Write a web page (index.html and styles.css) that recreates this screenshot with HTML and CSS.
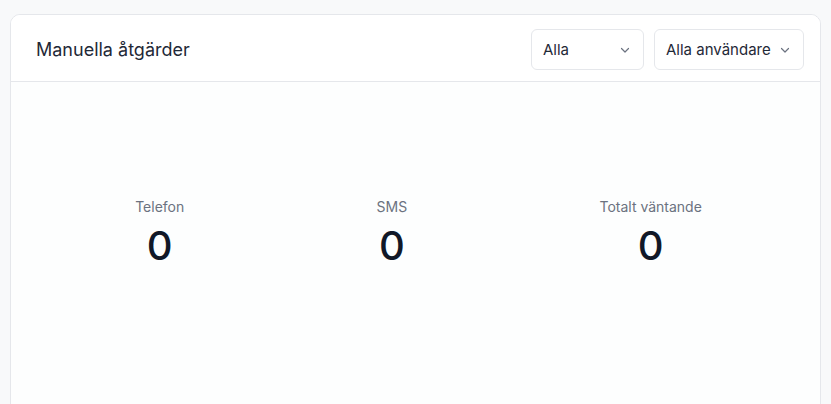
FILE: index.html
```html
<!DOCTYPE html>
<html lang="sv">
  <head>
    <meta charset="UTF-8" />
    <meta name="viewport" content="width=device-width, initial-scale=1.0" />
    <title>Manuella åtgärder</title>
    <link rel="stylesheet" href="styles.css">
  </head>
  <body>
    <div class="card">
      <div class="card-header">
        <h2 class="card-title">Manuella åtgärder</h2>
        <div class="filters">
          <div class="select select-type">
            <span>Alla</span>
            <svg class="chevron" viewBox="0 0 12 12" width="12" height="12">
              <path d="M2.5 4.5 6 8l3.5-3.5" />
            </svg>
          </div>
          <div class="select select-user">
            <span>Alla användare</span>
            <svg class="chevron" viewBox="0 0 12 12" width="12" height="12">
              <path d="M2.5 4.5 6 8l3.5-3.5" />
            </svg>
          </div>
        </div>
      </div>

      <div class="card-body">
        <div class="stats">
          <div class="stat">
            <p class="stat-label">Telefon</p>
            <p class="stat-value">0</p>
          </div>
          <div class="stat">
            <p class="stat-label">SMS</p>
            <p class="stat-value">0</p>
          </div>
          <div class="stat">
            <p class="stat-label">Totalt väntande</p>
            <p class="stat-value">0</p>
          </div>
        </div>
      </div>
    </div>
  </body>
</html>
```

FILE: styles.css
```css
* {
  margin: 0;
  padding: 0;
  box-sizing: border-box;
}

body {
  font-family: "Inter", "Liberation Sans", sans-serif;
  background-color: #f8f9fa;
  padding: 14px 10px 0 10px;
  height: 100vh;
  overflow: hidden;
}

.card {
  display: flex;
  flex-direction: column;
  background-color: #fdfefe;
  border: 1px solid #e5e7eb;
  border-radius: 10px;
  height: 420px;
  overflow: hidden;
}

.card-header {
  display: flex;
  justify-content: space-between;
  align-items: center;
  padding: 14px 16px 11px 25px;
  border-bottom: 1px solid #e5e7eb;
  background-color: #fff;
}

.card-title {
  font-size: 18px;
  font-weight: 400;
  color: #1f2937;
}

.filters {
  display: flex;
  gap: 10px;
}

.select {
  display: flex;
  align-items: center;
  justify-content: space-between;
  height: 41px;
  padding: 0 12px 0 11px;
  border: 1px solid #e5e7eb;
  border-radius: 6px;
  font-size: 15px;
  color: #1f2937;
  background-color: #fff;
}

.select-type {
  width: 113px;
}

.select-user {
  width: 150px;
}

.chevron {
  fill: none;
  stroke: #6b7280;
  stroke-width: 1.2;
  stroke-linecap: round;
  stroke-linejoin: round;
}

.card-body {
  flex: 1;
  padding-top: 115px;
}

.stats {
  display: flex;
  justify-content: space-around;
  padding: 0 22px 0 28px;
}

.stat {
  text-align: center;
}

.stat-label {
  font-size: 14px;
  color: #6b7280;
  line-height: 20px;
}

.stat-value {
  font-size: 40px;
  font-weight: 500;
  color: #111827;
  line-height: 48px;
  margin-top: 5px;
}
```
